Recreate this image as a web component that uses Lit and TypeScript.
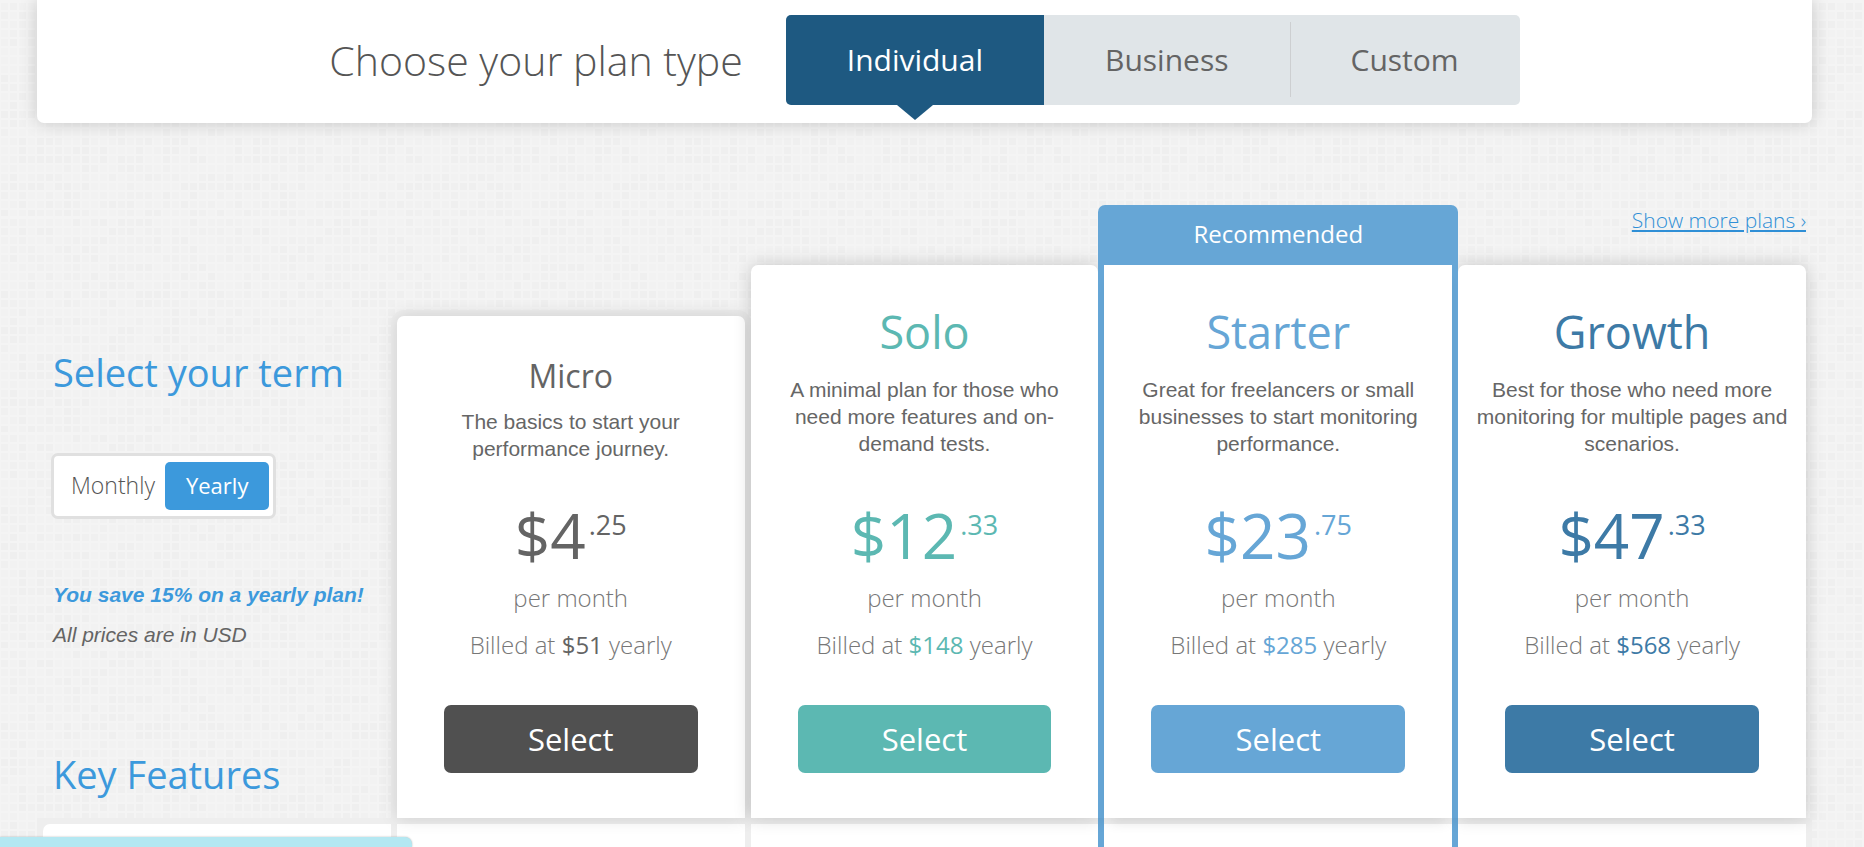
import { LitElement, html, css, unsafeCSS, nothing } from "lit";
import { customElement, property, state } from "lit/decorators.js";
import { classMap } from "lit/directives/class-map.js";

interface Plan {
  id: string;
  name: string;
  text: string;
  whole: string;
  cents: string;
  billed: string;
}

const plans: Plan[] = [
  { id: "micro", name: "Micro", text: "The basics to start your performance journey.", whole: "4", cents: "25", billed: "51" },
  { id: "solo", name: "Solo", text: "A minimal plan for those who need more features and on-demand tests.", whole: "12", cents: "33", billed: "148" },
  { id: "starter", name: "Starter", text: "Great for freelancers or small businesses to start monitoring performance.", whole: "23", cents: "75", billed: "285" },
  { id: "growth", name: "Growth", text: "Best for those who need more monitoring for multiple pages and scenarios.", whole: "47", cents: "33", billed: "568" },
];

// Woven paper tile: a 24 x 24 grid of soft squares, 9px apart, in slightly varying greys.
function paperTile(): string {
  const shades = ["efefef", "f0f0f0", "f1f1f1", "f2f2f2", "f2f2f2"];
  let seed = 7;
  let rects = "";
  for (let y = 0; y < 24; y++) {
    for (let x = 0; x < 24; x++) {
      seed = (seed * 1103515245 + 12345) % 2147483648;
      const shade = shades[Math.floor((seed / 2147483648) * shades.length)];
      rects += `<rect x='${x * 9 + 1}' y='${y * 9 + 3}' width='7' height='7' fill='%23${shade}'/>`;
    }
  }
  return `url("data:image/svg+xml,<svg xmlns='http://www.w3.org/2000/svg' width='216' height='216'><rect width='216' height='216' fill='%23f4f4f4'/>${rects}</svg>")`;
}

@customElement("plan-card")
class PlanCard extends LitElement {
  @property({ attribute: false }) plan!: Plan;

  static styles = css`
    :host {
      display: block;
      --accent: #646464;
      --fill: #505050;
    }
    .card {
      background: #fff;
      padding: 40px 12px 45px;
      text-align: center;
      color: #666;
      border-radius: 7px 7px 0 0;
      box-shadow: 0 0 18px rgba(0, 0, 0, 0.18);
      font: 21px/27px "Liberation Sans", Arial, sans-serif;
    }
    .micro { box-shadow: 0 0 18px rgba(0, 0, 0, 0.14), 0 0 0 6px #eee; }
    .solo { --accent: #5cb8b2; --fill: #5cb8b2; }
    .starter {
      --accent: #66a6d6;
      --fill: #66a6d6;
      border-radius: 0;
      box-shadow: 0 10px 12px -6px rgba(0, 0, 0, 0.12);
    }
    .growth { --accent: #3d7aa6; --fill: #3d7aa6; }
    .name, .price, .note, .select {
      font-family: "Open Sans", "Noto Sans", sans-serif;
      margin: 0;
    }
    .name {
      font-size: 45px;
      line-height: 54px;
      font-weight: 400;
      color: var(--accent);
    }
    .text { margin: 17px 0 42px; }
    .micro .name { font-size: 32px; line-height: 40px; }
    .micro .text { margin: 12px 48px 37px; }
    .solo .text, .starter .text { margin-left: 12px; margin-right: 12px; }
    .price {
      display: flex;
      justify-content: center;
      gap: 3px;
      font-size: 62px;
      line-height: 72px;
      color: var(--accent);
    }
    .cents {
      font-size: 27px;
      line-height: 52px;
    }
    .note {
      font-size: 24px;
      line-height: 30px;
      font-weight: 300;
      color: #777;
      margin-top: 12px;
    }
    .billed { margin-top: 17px; }
    .amount { color: var(--accent); font-weight: 400; }
    .select {
      display: block;
      width: calc(100% - 70px);
      height: 68px;
      margin: 45px auto 0;
      padding: 0;
      border: 0;
      border-radius: 7px;
      background: var(--fill);
      color: #fff;
      font-size: 31px;
      font-weight: 400;
      cursor: pointer;
    }
  `;

  render() {
    const p = this.plan;
    return html`
      <article class="card ${p.id}">
        <h3 class="name">${p.name}</h3>
        <p class="text">${p.text}</p>
        <p class="price"><span>$${p.whole}</span><span class="cents">.${p.cents}</span></p>
        <p class="note">per month</p>
        <p class="note billed">Billed at <span class="amount">$${p.billed}</span> yearly</p>
        <button class="select" type="button">Select</button>
      </article>
    `;
  }
}

@customElement("app-root")
class AppRoot extends LitElement {
  @state() private kind = "Individual";
  @state() private term = "Yearly";

  static styles = css`
    :host {
      display: flex;
      flex-direction: column;
      box-sizing: border-box;
      min-height: 100vh;
      padding: 0 52px 0 37px;
      background: ${unsafeCSS(paperTile())};
      font-family: "Open Sans", "Noto Sans", sans-serif;
      color: #646464;
    }
    button { font-family: inherit; border: 0; margin: 0; cursor: pointer; }
    .chooser {
      display: flex;
      justify-content: center;
      align-items: center;
      gap: 43px;
      padding: 15px 0 18px;
      background: #fff;
      border-radius: 0 0 7px 7px;
      box-shadow: 0 0 18px rgba(0, 0, 0, 0.18);
    }
    .question {
      margin: 0;
      font-size: 41px;
      line-height: 60px;
      font-weight: 300;
      color: #555;
    }
    .tabs {
      display: flex;
      border-radius: 5px;
      background: #e0e5e8;
    }
    .tab {
      position: relative;
      height: 90px;
      padding: 0 61px 2px;
      background: none;
      color: #646464;
      font-size: 30px;
      font-weight: 500;
    }
    .tab + .tab:not(.active)::before {
      content: "";
      position: absolute;
      left: 0;
      top: 7px;
      bottom: 8px;
      width: 1px;
      background: #cdcfd1;
    }
    .tab.active + .tab::before { display: none; }
    .tab.active {
      background: #1e5981;
      color: #fff;
      border-radius: 5px 0 0 5px;
    }
    .tab.active::after {
      content: "";
      position: absolute;
      left: calc(50% - 18px);
      top: 100%;
      border: 18px solid transparent;
      border-top: 15px solid #1e5981;
      border-bottom: 0;
    }
    .plans {
      display: grid;
      grid-template-columns: repeat(5, minmax(0, 1fr));
      gap: 6px;
      align-items: end;
      padding: 82px 6px 0;
      position: relative;
      z-index: 1;
    }
    .term { padding: 0 0 21px 10px; }
    .heading {
      margin: 0;
      font-size: 38px;
      line-height: 46px;
      font-weight: 400;
      color: #3c99dc;
      white-space: nowrap;
    }
    .toggle {
      display: inline-flex;
      margin: 58px 0 62px -2px;
      padding: 6px 4px 6px 3px;
      border: 3px solid #e0e0e0;
      border-radius: 7px;
      background: #fff;
    }
    .option {
      height: 48px;
      padding: 0 10px 3px 14px;
      border-radius: 5px;
      background: none;
      color: #555;
      font-size: 23px;
      font-weight: 300;
    }
    .option.on {
      padding: 0 21px 3px;
      background: #3c99dc;
      color: #fff;
      font-size: 22px;
      font-weight: 400;
    }
    .hint {
      margin: 0 0 13px;
      font: italic 21px/27px "Liberation Sans", Arial, sans-serif;
      white-space: nowrap;
    }
    .hint.save { color: #3c99dc; font-weight: 700; }
    .features-title { margin-top: 103px; }
    .more {
      margin: 0 0 30px;
      text-align: right;
      font-size: 21px;
      line-height: 30px;
      font-weight: 300;
    }
    .more-link {
      color: #2f8fd6;
      text-decoration-thickness: 2px;
      text-underline-offset: 2px;
    }
    .recommended { margin: 0 -6px; position: relative; }
    .badge {
      height: 60px;
      border-radius: 7px 7px 0 0;
      background: #66a6d6;
      color: #fff;
      font-size: 24px;
      line-height: 58px;
      text-align: center;
    }
    .rails {
      border: solid #66a6d6;
      border-width: 0 6px;
    }
    .features {
      flex: 1;
      display: grid;
      grid-template-columns: repeat(5, minmax(0, 1fr));
      gap: 6px;
      padding: 6px 6px 0;
      background: #eee;
    }
    .cell { background: #fff; }
    .cell:first-child { border-top-left-radius: 7px; }
    .cell.rails {
      margin: -6px -6px 0;
      background: linear-gradient(#eee 6px, #fff 6px);
    }
    .drawer {
      position: fixed;
      left: 0;
      bottom: 0;
      width: 412px;
      height: 10px;
      border-radius: 0 7px 0 0;
      background: #b4e8f2;
      box-shadow: 0 0 2px rgba(0, 0, 0, 0.3);
      z-index: 2;
    }
  `;

  private column(plan: Plan) {
    const card = html`<plan-card .plan=${plan}></plan-card>`;
    if (plan.id === "starter") {
      return html`<div class="recommended"><div class="badge">Recommended</div><div class="rails">${card}</div></div>`;
    }
    return html`<div>
      ${plan.id === "growth" ? html`<div class="more"><a class="more-link" href="#plans">Show more plans ›</a></div>` : nothing}
      ${card}
    </div>`;
  }

  render() {
    return html`
      <header class="chooser">
        <h1 class="question">Choose your plan type</h1>
        <nav class="tabs">
          ${["Individual", "Business", "Custom"].map(
            (name) => html`<button
              type="button"
              class=${classMap({ tab: true, active: this.kind === name })}
              @click=${() => (this.kind = name)}
            >${name}</button>`
          )}
        </nav>
      </header>
      <main class="plans">
        <section class="term">
          <h2 class="heading">Select your term</h2>
          <div class="toggle">
            ${["Monthly", "Yearly"].map(
              (name) => html`<button
                type="button"
                class=${classMap({ option: true, on: this.term === name })}
                @click=${() => (this.term = name)}
              >${name}</button>`
            )}
          </div>
          <p class="hint save">You save 15% on a yearly plan!</p>
          <p class="hint">All prices are in USD</p>
          <h2 class="heading features-title">Key Features</h2>
        </section>
        ${plans.map((plan) => this.column(plan))}
      </main>
      <section class="features">
        <div class="cell"></div>
        <div class="cell"></div>
        <div class="cell"></div>
        <div class="cell rails"></div>
        <div class="cell"></div>
      </section>
      <div class="drawer"></div>
    `;
  }
}
